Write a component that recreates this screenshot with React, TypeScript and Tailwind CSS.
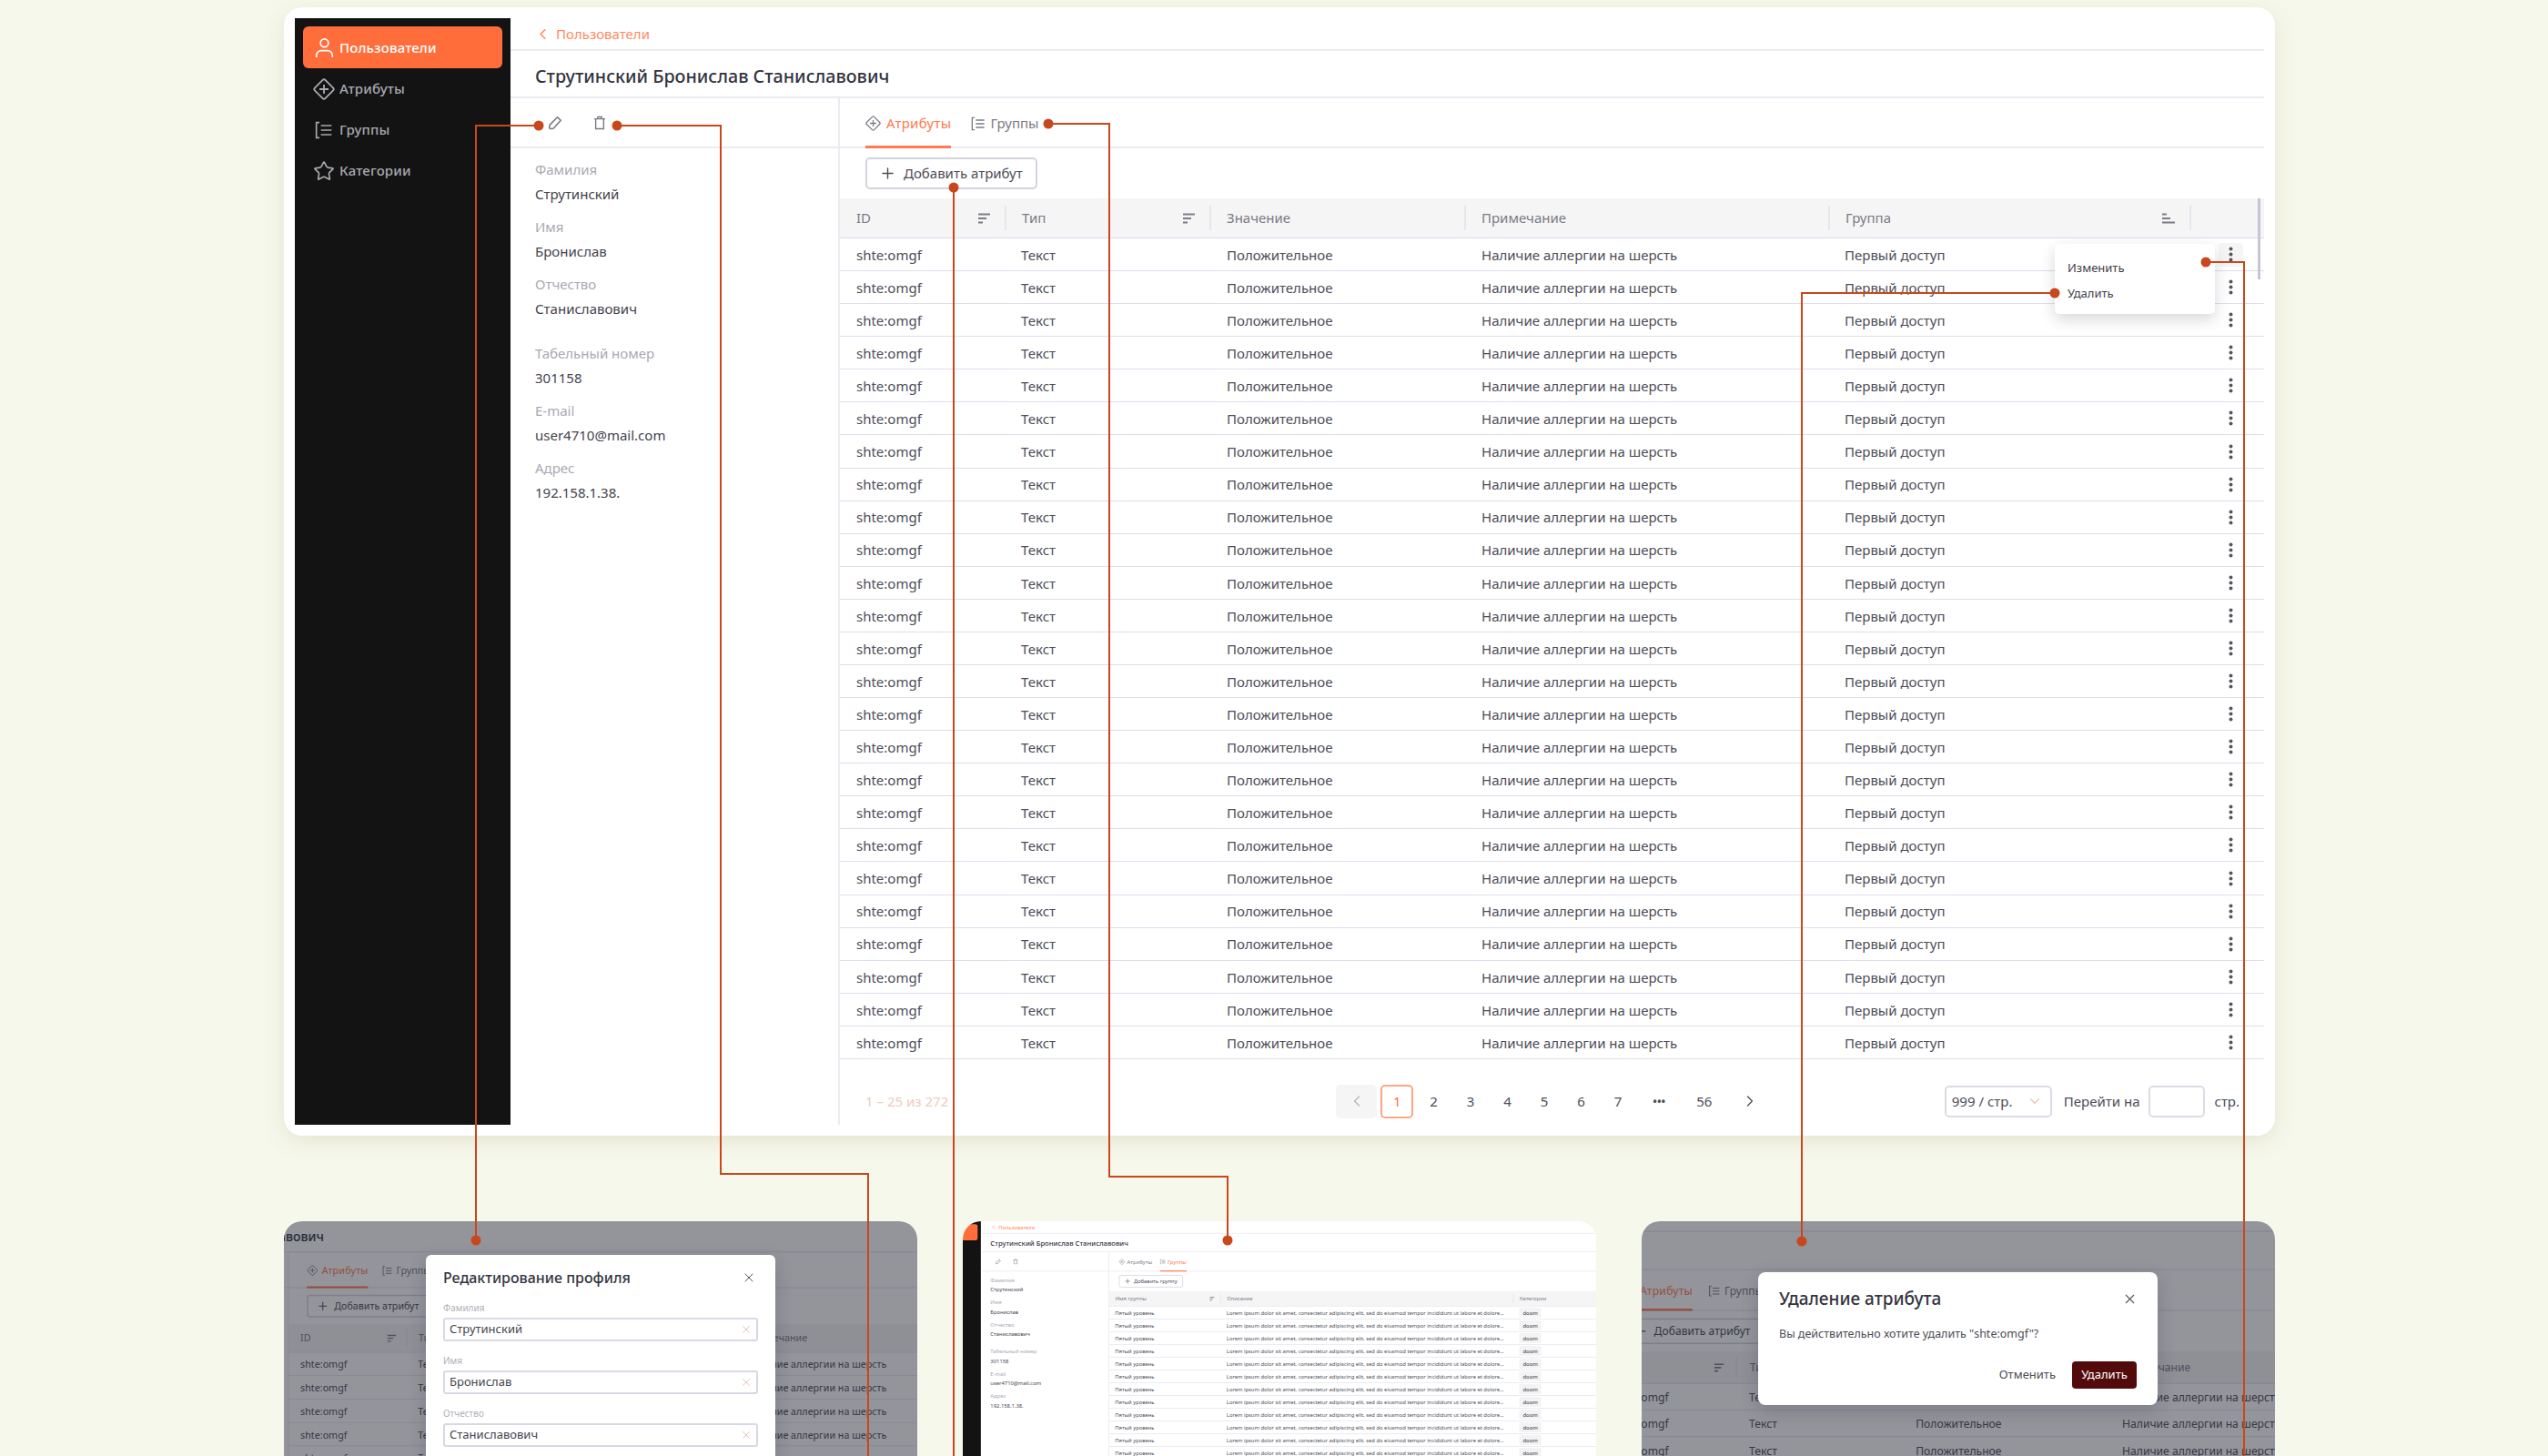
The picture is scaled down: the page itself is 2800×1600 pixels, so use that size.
import React from 'react';
import { Plus, ChevronLeft, ChevronRight, ChevronDown, X, Star } from 'lucide-react';

const ATTR_COLS = 'grid grid-cols-[181px_225px_280px_400px_397px_80px]';
const GROUP_COLS = 'grid grid-cols-[314px_827px_422px]';
const ROWS = Array.from({ length: 25 }, (_, i) => i);

function UserIcon({ className }: { className?: string }) {
  return (
    <svg className={className} viewBox="0 0 24 26" fill="none" stroke="currentColor" strokeWidth="2">
      <circle cx="12" cy="7" r="5" />
      <path d="M2 25v-2.500a6 6 0 0 1 6-6h8a6 6 0 0 1 6 6V25" />
    </svg>
  );
}

function DiamondIcon({ className }: { className?: string }) {
  return (
    <svg className={className} viewBox="0 0 24 24" fill="none" stroke="currentColor" strokeWidth="1.800">
      <path d="M10.600 1.900a2 2 0 0 1 2.800 0l8.700 8.700a2 2 0 0 1 0 2.800l-8.700 8.700a2 2 0 0 1-2.800 0l-8.700-8.700a2 2 0 0 1 0-2.800z" />
      <path d="M12 7v10M7 12h10" />
    </svg>
  );
}

function GroupsIcon({ className }: { className?: string }) {
  return (
    <svg className={className} viewBox="0 0 24 24" fill="none" stroke="currentColor" strokeWidth="2">
      <path d="M6 2H2v20h4M8 6h14M8 12h14M8 18h14" />
    </svg>
  );
}

function PencilIcon({ className }: { className?: string }) {
  return (
    <svg className={className} viewBox="0 0 16 16" fill="none" stroke="currentColor" strokeWidth="1.600">
      <path d="M10.500 1.800l3.700 3.400-7.700 8.600c-.8.800-3.500 1-4.500.3-.6-1-.2-3.400.5-4.200z" />
    </svg>
  );
}

function TrashIcon({ className }: { className?: string }) {
  return (
    <svg className={className} viewBox="0 0 16 18" fill="none" stroke="currentColor" strokeWidth="1.600">
      <path d="M1 4h14M5.500 4V1.500h5V4M3 4v12.500h10V4" />
    </svg>
  );
}

function SortIcon({ className, up }: { className?: string; up?: boolean }) {
  return (
    <svg className={className} viewBox="0 0 14 14" fill="none" stroke="currentColor" strokeWidth="2">
      {up ? <path d="M0 2.500h5M0 7h9M0 11.500h14" /> : <path d="M1 2.500h13M1 7h9M1 11.500h5" />}
    </svg>
  );
}

function KebabIcon() {
  return (
    <svg className="w-[5px] h-[17px] text-[#55555f]" viewBox="0 0 5 17" fill="currentColor">
      <circle cx="2.500" cy="2.500" r="2" />
      <circle cx="2.500" cy="8.500" r="2" />
      <circle cx="2.500" cy="14.500" r="2" />
    </svg>
  );
}

function NavItem({ icon, label, active }: { icon: React.ReactNode; label: string; active?: boolean }) {
  return (
    <div
      className={
        active
          ? 'flex items-center h-[46px] rounded-[6px] bg-[#ff6d3b] text-white pl-[11px] gap-[5px] font-medium tracking-[0.01em]'
          : 'flex items-center h-[45px] rounded-[6px] text-[#a9a9af] pl-[11px] gap-[5px] font-medium tracking-[0.01em]'
      }
    >
      <span className="w-[24px] h-[24px] flex items-center justify-center">{icon}</span>
      <span>{label}</span>
    </div>
  );
}

function Field({ label, value, className }: { label: string; value: string; className?: string }) {
  return (
    <div className={className}>
      <div className="h-[26px] leading-[26px] text-[#a9a9b2]">{label}</div>
      <div className="h-[26px] leading-[28px] text-[#44444e]">{value}</div>
    </div>
  );
}

function HeaderCell({ label, sort, first, up }: { label?: string; sort?: boolean; first?: boolean; up?: boolean }) {
  return (
    <div className={first ? 'flex items-center h-[27px] pl-[18px] pr-[16px]' : 'flex items-center h-[27px] pl-[17px] pr-[16px] border-l-2 border-[#e6e6ec]'}>
      <span>{label}</span>
      {sort && <SortIcon up={up} className="ml-auto w-[14px] h-[14px] text-[#7d7d88]" />}
    </div>
  );
}

function AttributesTable({ menu }: { menu?: boolean }) {
  return (
    <div className="relative">
      <div className={`${ATTR_COLS} items-center h-[44px] bg-[#f5f5f6] border-b border-[#dfdded] text-[#7b7b85]`}>
        <HeaderCell first label="ID" sort />
        <HeaderCell label="Тип" sort />
        <HeaderCell label="Значение" />
        <HeaderCell label="Примечание" />
        <HeaderCell label="Группа" sort up />
        <HeaderCell />
      </div>
      {ROWS.map((i) => (
        <div key={i} className={`${ATTR_COLS} items-center h-[36.080px] border-b border-[#dfdded] text-[#4d4d57]`}>
          <div className="pl-[18px] pt-[1px]">shte:omgf</div>
          <div className="pl-[18px] pt-[1px]">Текст</div>
          <div className="pl-[19px] pt-[1px]">Положительное</div>
          <div className="pl-[19px] pt-[1px]">Наличие аллергии на шерсть</div>
          <div className="pl-[18px] pt-[1px]">Первый доступ</div>
          <div className="flex justify-center pl-[10px]">
            <span className={i === 0 ? 'w-[27px] h-[26px] rounded-[4px] bg-[#f5f5f6] flex items-center justify-center' : 'w-[27px] h-[26px] flex items-center justify-center'}>
              <KebabIcon />
            </span>
          </div>
        </div>
      ))}
      <div className="absolute top-0 right-[4px] w-[3px] h-[89px] bg-[#c6c5d6]" />
      {menu && (
        <div className="absolute top-[50px] left-[1335px] w-[176px] h-[77px] rounded-[5px] bg-white shadow-[0_6px_16px_rgba(40,40,60,0.18)] pl-[14px] pt-[13px] text-[13px] text-[#3f3f4a]">
          <div className="h-[28px] leading-[26px]">Изменить</div>
          <div className="h-[28px] leading-[26px]">Удалить</div>
        </div>
      )}
    </div>
  );
}

function GroupsTable() {
  return (
    <div>
      <div className={`${GROUP_COLS} items-center h-[44px] bg-[#f5f5f6] border-b border-[#dfdded] text-[#7b7b85]`}>
        <HeaderCell first label="Имя группы" sort />
        <HeaderCell label="Описание" />
        <HeaderCell label="Категории" />
      </div>
      {ROWS.map((i) => (
        <div key={i} className={`${GROUP_COLS} items-center h-[36px] border-b-2 border-[#e6e5f0] text-[#4d4d57]`}>
          <div className="pl-[17px]">Пятый уровень</div>
          <div className="pl-[18px] truncate pr-[24px]">
            Lorem ipsum dolor sit amet, consectetur adipiscing elit, sed do eiusmod tempor incididunt ut labore et dolore magna aliqua
          </div>
          <div className="pl-[18px]">
            <span className="inline-flex items-center justify-center w-[62px] h-[28px] rounded-[4px] bg-[#f3f3f3] font-medium">doom</span>
          </div>
        </div>
      ))}
    </div>
  );
}

function Pagination() {
  return (
    <div className="flex items-center h-[71px] pb-[6px] pt-[28px] pl-[28px] pr-[27px] text-[#4d4d57]">
      <span className="text-[#efcbbd]">1 – 25 из 272</span>
      <div className="ml-[426px] flex items-center h-[37px]">
        <span className="w-[45px] h-[37px] rounded-[5px] bg-[#f5f5f6] flex items-center justify-center text-[#b4b4bc] mr-[4px]">
          <ChevronLeft size={20} strokeWidth={1.500} />
        </span>
        <span className="w-[36px] h-[37px] rounded-[5px] border-2 border-[#ffa583] text-[#ff6d3b] flex items-center justify-center mr-[2px]">1</span>
        {['2', '3', '4', '5', '6', '7'].map((p) => (
          <span key={p} className="w-[40.500px] text-center">{p}</span>
        ))}
        <span className="w-[49px] text-center tracking-[-1px]">•••</span>
        <span className="w-[51px] text-center">56</span>
        <span className="w-[49px] flex justify-center"><ChevronRight size={20} strokeWidth={1.500} /></span>
      </div>
      <div className="ml-auto flex items-center h-[37px]">
        <span className="w-[118px] h-[35px] rounded-[5px] border-2 border-[#dcdbe6] flex items-center pl-[6px] pr-[8px]">
          999 / стр.
          <ChevronDown size={18} strokeWidth={1.500} className="ml-auto text-[#efbda9]" />
        </span>
        <span className="ml-[13px]">Перейти на</span>
        <span className="ml-[10px] w-[62px] h-[35px] rounded-[5px] border-2 border-[#dcdbe6]" />
        <span className="ml-[10px]">стр.</span>
      </div>
    </div>
  );
}

function Screen({ tab = 'attrs', menu, className }: { tab?: 'attrs' | 'groups'; menu?: boolean; className?: string }) {
  const isAttrs = tab === 'attrs';
  return (
    <div className={`w-[2188px] h-[1240px] bg-white p-[12px] flex text-[15px] font-['Noto_Sans',sans-serif] ${className ?? ''}`}>
      <aside className="w-[237px] bg-[#131314] px-[9px] pt-[9px] flex flex-col shrink-0">
        <NavItem active label="Пользователи" icon={<UserIcon className="w-[21px] h-[23px]" />} />
        <NavItem label="Атрибуты" icon={<DiamondIcon className="w-[24px] h-[24px]" />} />
        <NavItem label="Группы" icon={<GroupsIcon className="w-[20px] h-[20px]" />} />
        <NavItem label="Категории" icon={<Star size={24} strokeWidth={1.700} />} />
      </aside>
      <main className="flex-1 flex flex-col min-w-0">
        <div className="h-[36px] shrink-0 flex items-center pl-[27px] gap-[5px] border-b-2 border-[#ebebf2] text-[#ff8a62]">
          <ChevronLeft size={19} strokeWidth={2} className="-ml-[1px]" />
          <span>Пользователи</span>
        </div>
        <div className="h-[52px] shrink-0 flex items-center pl-[27px] pt-[6px] border-b-2 border-[#ebebf2] text-[19.700px] font-medium text-[#33343f]">
          Струтинский Бронислав Станиславович
        </div>
        <div className="flex-1 flex min-h-0">
          <div className="w-[362px] shrink-0 border-r-2 border-[#ebebf2]">
            <div className="h-[55px] flex items-center border-b-2 border-[#ebebf2] text-[#7a7a85]">
              <PencilIcon className="ml-[41px] w-[16px] h-[16px]" />
              <TrashIcon className="ml-[34px] w-[14px] h-[16px]" />
            </div>
            <div className="pt-[10px] pl-[27px] flex flex-col gap-[11px]">
              <Field label="Фамилия" value="Струтинский" />
              <Field label="Имя" value="Бронислав" />
              <Field label="Отчество" value="Станиславович" />
              <Field className="mt-[13px]" label="Табельный номер" value="301158" />
              <Field label="E-mail" value="user4710@mail.com" />
              <Field label="Адрес" value="192.158.1.38." />
            </div>
          </div>
          <div className="flex-1 min-w-0">
            <div className="h-[55px] flex items-stretch border-b-2 border-[#ebebf2] pl-[28px] gap-[22px]">
              <div className={isAttrs ? 'flex items-center gap-[6px] pt-[2px] -mb-[2px] border-b-[3px] border-[#ff7a50] text-[#ff7a50] tracking-[0.02em]' : 'flex items-center gap-[6px] pt-[2px] text-[#7b7b85] tracking-[0.02em]'}>
                <DiamondIcon className="w-[17px] h-[17px] text-[#7b7b85]" />
                <span>Атрибуты</span>
              </div>
              <div className={isAttrs ? 'flex items-center gap-[5px] pt-[2px] text-[#7b7b85]' : 'flex items-center gap-[5px] pt-[2px] -mb-[2px] border-b-[3px] border-[#ff7a50] text-[#ff7a50]'}>
                <GroupsIcon className="w-[16px] h-[16px] text-[#7b7b85]" />
                <span>Группы</span>
              </div>
            </div>
            <div className="py-[10px] pl-[28px]">
              <div className="inline-flex items-center h-[35px] rounded-[5px] border-2 border-[#d4d3df] pl-[13px] pr-[14px] gap-[8px] text-[#4d4d57]">
                <Plus size={19} strokeWidth={1.800} />
                <span>{isAttrs ? 'Добавить атрибут' : 'Добавить группу'}</span>
              </div>
            </div>
            {isAttrs ? <AttributesTable menu={menu} /> : <GroupsTable />}
            {isAttrs && <Pagination />}
          </div>
        </div>
      </main>
    </div>
  );
}

function ModalField({ label, value }: { label: string; value: string }) {
  return (
    <div>
      <div className="h-[16px] leading-[16px] text-[10px] text-[#b0b0b8]">{label}</div>
      <div className="mt-[3px] h-[26px] rounded-[3px] border-2 border-[#d9d8e4] flex items-center pl-[5px] pr-[4px] text-[13px] text-[#45454f]">
        {value}
        <X size={14} strokeWidth={1.500} className="ml-auto text-[#e6bcab]" />
      </div>
    </div>
  );
}

function Connectors() {
  const dots = [
    [592, 138], [678, 138], [1048, 206], [1152, 136], [2258, 322], [2424, 288],
    [523, 1363], [1349, 1363], [1980, 1364],
  ];
  return (
    <svg className="absolute inset-0 w-[2800px] h-[1600px] pointer-events-none" viewBox="0 0 2800 1600" fill="none">
      <g stroke="#c8471c" strokeWidth="2">
        <path d="M592 138H523V1363" />
        <path d="M678 138H792V1290H954V1600" />
        <path d="M1048 206V1600" />
        <path d="M1152 136H1219V1293H1349V1363" />
        <path d="M2258 322H1980V1364" />
        <path d="M2424 288H2466V1600" />
      </g>
      {dots.map(([x, y]) => (
        <circle key={`${x}-${y}`} cx={x} cy={y} r="5.500" fill="#c8471c" />
      ))}
    </svg>
  );
}

export default function App() {
  return (
    <div className="relative w-[2800px] h-[1600px] overflow-hidden bg-[#f6f8ec] pt-[8px] pl-[312px] font-['Noto_Sans',sans-serif]">
      <Screen menu className="rounded-[20px] shadow-[0_6px_24px_rgba(130,110,40,0.14)]" />

      <div className="mt-[94px] flex gap-[50px]">
        {/* edit profile */}
        <div className="relative w-[696px] h-[258px] overflow-hidden rounded-t-[20px] bg-white">
          <Screen className="absolute left-[-431px] top-[-37px] scale-[0.714] origin-top-left" />
          <div className="absolute inset-0 bg-[#1e202d]/[.475]" />
          <div className="absolute left-[156px] top-[37px] w-[384px] h-[260px] rounded-[6px] bg-white px-[19px] shadow-[0_6px_20px_rgba(30,30,50,0.2)]">
            <div className="flex items-center h-[50px] text-[16px] font-medium text-[#33343f]">
              Редактирование профиля
              <X size={16} strokeWidth={1.500} className="ml-auto mr-[2px] text-[#55555f]" />
            </div>
            <div className="flex flex-col gap-[13px]">
              <ModalField label="Фамилия" value="Струтинский" />
              <ModalField label="Имя" value="Бронислав" />
              <ModalField label="Отчество" value="Станиславович" />
            </div>
          </div>
        </div>

        {/* groups tab */}
        <div className="relative w-[696px] h-[258px] overflow-hidden rounded-t-[20px] bg-white">
          <Screen tab="groups" className="absolute left-[-77px] top-[-5px] scale-[0.389] origin-top-left" />
        </div>

        {/* delete attribute */}
        <div className="relative w-[696px] h-[258px] overflow-hidden rounded-t-[20px] bg-white">
          <Screen className="absolute left-[-538px] top-[-27px] scale-[0.81] origin-top-left" />
          <div className="absolute inset-0 bg-[#1e202d]/[.475]" />
          <div className="absolute left-[128px] top-[56px] w-[439px] h-[146px] rounded-[8px] bg-white px-[23px] shadow-[0_6px_20px_rgba(30,30,50,0.2)]">
            <div className="flex items-center h-[58px] text-[19px] font-medium text-[#33343f]">
              Удаление атрибута
              <X size={17} strokeWidth={1.500} className="ml-auto -mr-[1px] text-[#55555f]" />
            </div>
            <div className="text-[12.500px] leading-[20px] text-[#4d4d57]">Вы действительно хотите удалить "shte:omgf"?</div>
            <div className="mt-[20px] flex items-center justify-end gap-[18px] text-[13px]">
              <span className="text-[#4d4d57]">Отменить</span>
              <span className="w-[71px] h-[30px] rounded-[4px] bg-[#530a0a] text-white flex items-center justify-center">Удалить</span>
            </div>
          </div>
        </div>
      </div>

      <Connectors />
    </div>
  );
}
